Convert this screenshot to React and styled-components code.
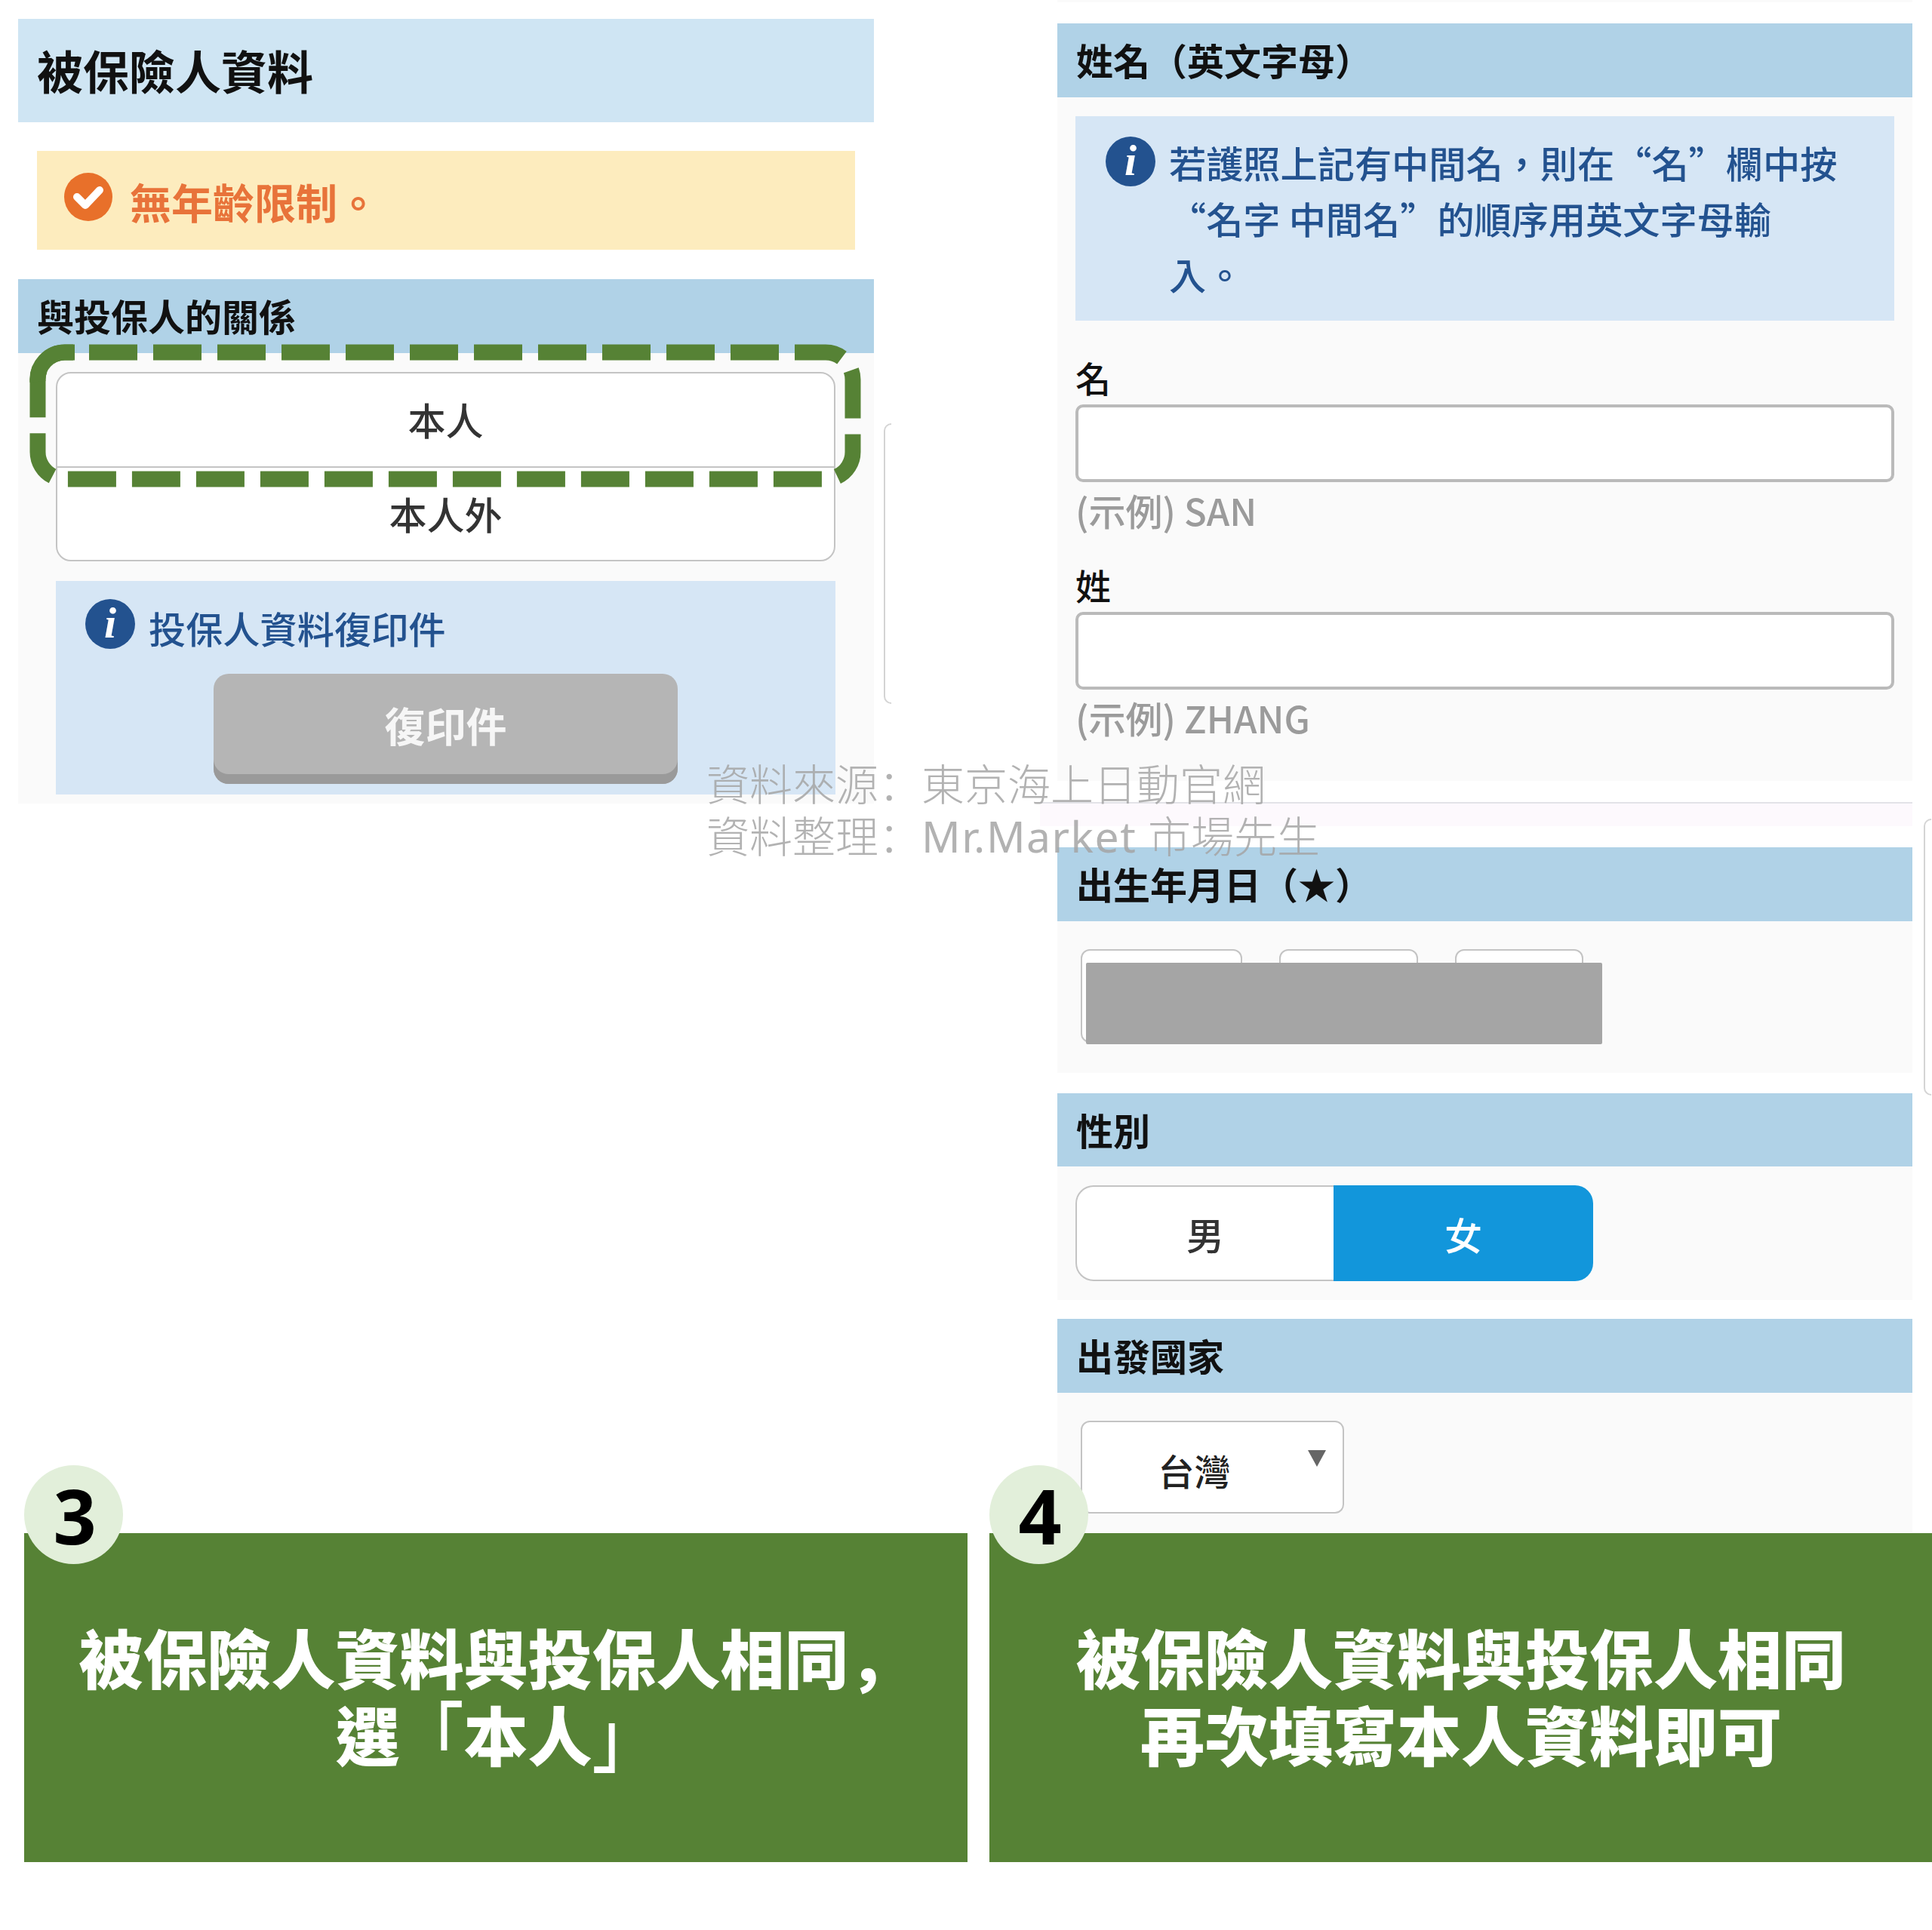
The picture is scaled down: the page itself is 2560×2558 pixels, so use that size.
import React from "react";
import { styled, createGlobalStyle } from "styled-components";

const GlobalStyle = createGlobalStyle`
  html, body { margin: 0; padding: 0; background: #fff; }
  body { font-family: "Noto Sans CJK TC", "Noto Sans", sans-serif; }
  * { box-sizing: border-box; }
`;

const Page = styled.div`
  position: relative;
  width: 2560px;
  height: 2558px;
  overflow: hidden;
  background: #fff;
`;

const Top = styled.div`
  display: grid;
  grid-template-columns: 1280px 1280px;
  height: 2032px;
`;

const LeftCol = styled.div`
  position: relative;
  padding: 25px 122px 0 24px;
`;

const RightCol = styled.div`
  position: relative;
  padding: 0 26px 0 121px;
`;

const TitleBar = styled.div`
  height: 137px;
  padding-left: 25px;
  background: #cfe5f3;
  color: #111;
  font-size: 61px;
  font-weight: 700;
  line-height: 136px;
`;

const Notice = styled.div`
  display: flex;
  align-items: center;
  gap: 23px;
  height: 131px;
  margin: 38px 25px 39px;
  padding: 0 0 0 36px;
  background: #fdecbe;
  color: #e8733a;
  font-size: 55px;
  font-weight: 700;
`;

const SectionBar = styled.div`
  height: ${(p) => p.$h || 98}px;
  padding-left: 25px;
  background: #b0d2e7;
  color: #111;
  font-size: 49px;
  font-weight: 700;
  line-height: ${(p) => (p.$h || 98) - 2}px;
`;

const Panel = styled.div`
  height: ${(p) => p.$h}px;
  padding: ${(p) => p.$pad || "25px 24px 0"};
  margin-bottom: ${(p) => p.$mb || 0}px;
  background: #fafafa;
`;

const ChoiceGroup = styled.div`
  display: flex;
  flex-direction: column;
  margin: 0 51px 0 50px;
  background: #fff;
  border: 2px solid #c4c4c4;
  border-radius: 20px;
`;

const Choice = styled.div`
  height: ${(p) => p.$h}px;
  padding-bottom: ${(p) => p.$pb}px;
  display: flex;
  align-items: center;
  justify-content: center;
  color: #333;
  font-size: 50px;
  font-weight: 500;
  & + & { border-top: 2px solid #c4c4c4; }
`;

const InfoBox = styled.div`
  display: flex;
  align-items: flex-start;
  background: #d6e6f5;
  color: #23528f;
  font-size: 49.2px;
  font-weight: 500;
`;

const CopyInfo = styled(InfoBox)`
  flex-direction: column;
  align-items: stretch;
  height: 283px;
  margin: 26px 51px 0 50px;
  padding: 24px 0 0 39px;
`;

const CopyLine = styled.div`
  display: flex;
  align-items: center;
  gap: 18px;
  height: 66px;
`;

const CopyLabel = styled.span`
  padding-top: 8px;
`;

const CopyButton = styled.div`
  width: 615px;
  height: 146px;
  margin: 33px 0 0 170px;
  padding-bottom: 12px;
  display: flex;
  align-items: center;
  justify-content: center;
  border-radius: 20px;
  background: #b5b5b5;
  box-shadow: inset 0 -13px 0 #9a9a9a;
  color: #f6f6f6;
  font-size: 54px;
  font-weight: 700;
`;

const NameInfo = styled(InfoBox)`
  height: 271px;
  padding: 24px 0 0 40px;
  gap: 18px;
  line-height: 74px;
`;

const IconSlot = styled.div`
  flex: none;
  height: 66px;
  margin-top: 3px;
`;

const FieldLabel = styled.div`
  height: 60px;
  margin: ${(p) => p.$mt - 3}px 0 6px;
  color: #111;
  font-size: 47px;
  font-weight: 500;
  line-height: 60px;
`;

const TextInput = styled.input`
  display: block;
  width: 100%;
  height: 103px;
  background: #fff;
  border: 4px solid #bababa;
  border-radius: 10px;
`;

const Hint = styled.div`
  height: 63px;
  margin-top: 7px;
  color: #9b9b9b;
  font-size: 49px;
  font-weight: 500;
  line-height: 60px;
`;

const TopSliver = styled.div`
  height: 3px;
  margin-bottom: 28px;
  background: #fafafa;
`;

const Divider = styled.div`
  height: 32px;
  margin: 28px 0 28px -23px;
  background: #fdf9fd;
  border-top: 2px solid #e3e3e8;
`;

const DateRow = styled.div`
  position: relative;
  display: flex;
  gap: 49px;
  padding-left: 7px;
`;

const DateBox = styled.div`
  width: ${(p) => p.$w}px;
  height: 124px;
  background: #fff;
  border: 2px solid #c4c4c4;
  border-radius: 12px;
`;

const Redaction = styled.div`
  position: absolute;
  left: 14px;
  top: 18px;
  width: 684px;
  height: 108px;
  background: #a5a5a5;
  border-radius: 2px;
`;

const GenderToggle = styled.div`
  display: flex;
  width: 686px;
  height: 127px;
`;

const GenderOption = styled.div`
  flex: ${(p) => (p.$on ? "0 0 344px" : "0 0 342px")};
  display: flex;
  align-items: center;
  justify-content: center;
  font-size: 50px;
  font-weight: 500;
  color: ${(p) => (p.$on ? "#fff" : "#333")};
  background: ${(p) => (p.$on ? "#1296db" : "#fff")};
  border: ${(p) => (p.$on ? "none" : "2px solid #c4c4c4")};
  border-right: none;
  border-radius: ${(p) => (p.$on ? "0 24px 24px 0" : "24px 0 0 24px")};
`;

const SelectBox = styled.div`
  position: relative;
  width: 349px;
  height: 123px;
  margin-left: 7px;
  padding: 6px 48px 0 0;
  display: flex;
  align-items: center;
  justify-content: center;
  background: #fff;
  border: 2px solid #c4c4c4;
  border-radius: 12px;
  color: #222;
  font-size: 48px;
  font-weight: 500;
`;

const SelectArrow = styled.span`
  position: absolute;
  right: 22px;
  top: 37px;
  width: 0;
  height: 0;
  border-left: 12px solid transparent;
  border-right: 12px solid transparent;
  border-top: 22px solid #666;
`;

const Stub = styled.div`
  position: absolute;
  left: ${(p) => p.$l}px;
  top: ${(p) => p.$t}px;
  width: 10px;
  height: ${(p) => p.$h}px;
  background: #fff;
  border: 2px solid #d4d4d4;
  border-right: none;
  border-radius: 10px 0 0 10px;
`;

const DashFrame = styled.svg`
  position: absolute;
  left: 39px;
  top: 456px;
  width: 1102px;
  height: 190px;
`;

const Watermark = styled.div`
  position: absolute;
  left: 936px;
  top: 1003px;
  color: rgba(165, 165, 165, 0.85);
  font-family: "Noto Sans", "Noto Sans CJK TC", sans-serif;
  font-size: 57px;
  font-weight: 300;
  line-height: 66px;
  white-space: nowrap;
`;

const WatermarkLatin = styled.span`
  font-weight: 400;
  letter-spacing: 1.5px;
`;

const CaptionRow = styled.div`
  display: flex;
  gap: 29px;
  padding-left: 32px;
`;

const Caption = styled.div`
  position: relative;
  flex: 0 0 1250px;
  height: 436px;
  padding-top: 112px;
  background: #568235;
  color: #fff;
  font-size: 85px;
  font-weight: 900;
  line-height: 102px;
  text-align: center;
`;

const StepBadge = styled.div`
  position: absolute;
  left: 0;
  top: -90px;
  width: 131px;
  height: 131px;
  padding-left: 3px;
  display: flex;
  align-items: center;
  justify-content: center;
  border-radius: 50%;
  background: #e2efda;
  color: #000;
  font-family: "Open Sans", "Noto Sans", sans-serif;
  font-size: 100px;
  font-weight: 700;
  line-height: 1;
`;

const LowPunct = styled.span`
  font-family: "Noto Sans CJK SC", sans-serif;
`;

const TallBracket = styled.span`
  display: inline-block;
  font-weight: 500;
  transform: scaleY(1.2);
`;

const InfoIcon = () => (
  <svg width="66" height="66" viewBox="0 0 66 66" style={{ display: "block", flex: "none" }}>
    <circle cx="33" cy="33" r="33" fill="#23528f" />
    <text x="33" y="51" textAnchor="middle" fill="#fff" fontFamily="Liberation Serif, serif" fontStyle="italic" fontWeight="700" fontSize="58">
      i
    </text>
  </svg>
);

const CheckIcon = () => (
  <svg width="64" height="64" viewBox="0 0 64 64" style={{ flex: "none", marginTop: -10 }}>
    <circle cx="32" cy="32" r="32" fill="#e8702a" />
    <path d="M17 32 L28 43 L47 23" fill="none" stroke="#fff" strokeWidth="10" strokeLinecap="round" strokeLinejoin="round" />
  </svg>
);

const App = () => {
  return (
    <Page>
      <GlobalStyle />
      <Top>
        <LeftCol>
          <TitleBar>被保險人資料</TitleBar>
          <Notice>
            <CheckIcon />
            <span>無年齡限制。</span>
          </Notice>
          <SectionBar>與投保人的關係</SectionBar>
          <Panel $h={597} $pad="25px 0 0">
            <ChoiceGroup>
              <Choice $h={123} $pb={3}>本人</Choice>
              <Choice $h={124} $pb={2}>本人外</Choice>
            </ChoiceGroup>
            <CopyInfo>
              <CopyLine>
                <InfoIcon />
                <CopyLabel>投保人資料復印件</CopyLabel>
              </CopyLine>
              <CopyButton>復印件</CopyButton>
            </CopyInfo>
          </Panel>
        </LeftCol>

        <RightCol>
          <TopSliver />
          <SectionBar>姓名（英文字母）</SectionBar>
          <Panel $h={906}>
            <NameInfo>
              <IconSlot>
                <InfoIcon />
              </IconSlot>
              <div>
                若護照上記有中間名，則在“名”欄中按
                <br />
                “名字 中間名”的順序用英文字母輸
                <br />
                入。
              </div>
            </NameInfo>
            <FieldLabel $mt={48}>名</FieldLabel>
            <TextInput />
            <Hint>(示例) SAN</Hint>
            <FieldLabel $mt={39}>姓</FieldLabel>
            <TextInput />
            <Hint>(示例) ZHANG</Hint>
          </Panel>
          <Divider />
          <SectionBar>出生年月日（★）</SectionBar>
          <Panel $h={201} $mb={27} $pad="37px 24px 0">
            <DateRow>
              <DateBox $w={214} />
              <DateBox $w={184} />
              <DateBox $w={170} />
              <Redaction />
            </DateRow>
          </Panel>
          <SectionBar $h={97}>性別</SectionBar>
          <Panel $h={177} $mb={25}>
            <GenderToggle>
              <GenderOption>男</GenderOption>
              <GenderOption $on>女</GenderOption>
            </GenderToggle>
          </Panel>
          <SectionBar $h={98}>出發國家</SectionBar>
          <Panel $h={185} $pad="37px 24px 0">
            <SelectBox>
              台灣
              <SelectArrow />
            </SelectBox>
          </Panel>
        </RightCol>
      </Top>

      <CaptionRow>
        <Caption>
          <StepBadge>3</StepBadge>
          被保險人資料與投保人相同<LowPunct>，</LowPunct>
          <br />
          選<TallBracket>「</TallBracket>本人<TallBracket>」</TallBracket>
        </Caption>
        <Caption>
          <StepBadge>4</StepBadge>
          被保險人資料與投保人相同
          <br />
          再次填寫本人資料即可
        </Caption>
      </CaptionRow>

      <Stub $l={1171} $t={561} $h={372} />
      <Stub $l={2549} $t={1085} $h={367} />

      <DashFrame viewBox="0 0 1102 190">
        <rect x="11" y="11" width="1080" height="168" rx="36" fill="none" stroke="#568235" strokeWidth="21" strokeDasharray="64 21" strokeDashoffset="-32" />
        <path d="M11 50 A36 36 0 0 1 47 11 L60 11" fill="none" stroke="#568235" strokeWidth="21" />
      </DashFrame>

      <Watermark>
        資料來源<LowPunct>：</LowPunct>東京海上日動官網
        <br />
        資料整理<LowPunct>：</LowPunct>
        <WatermarkLatin>Mr.Market</WatermarkLatin> 市場先生
      </Watermark>
    </Page>
  );
};

export default App;
